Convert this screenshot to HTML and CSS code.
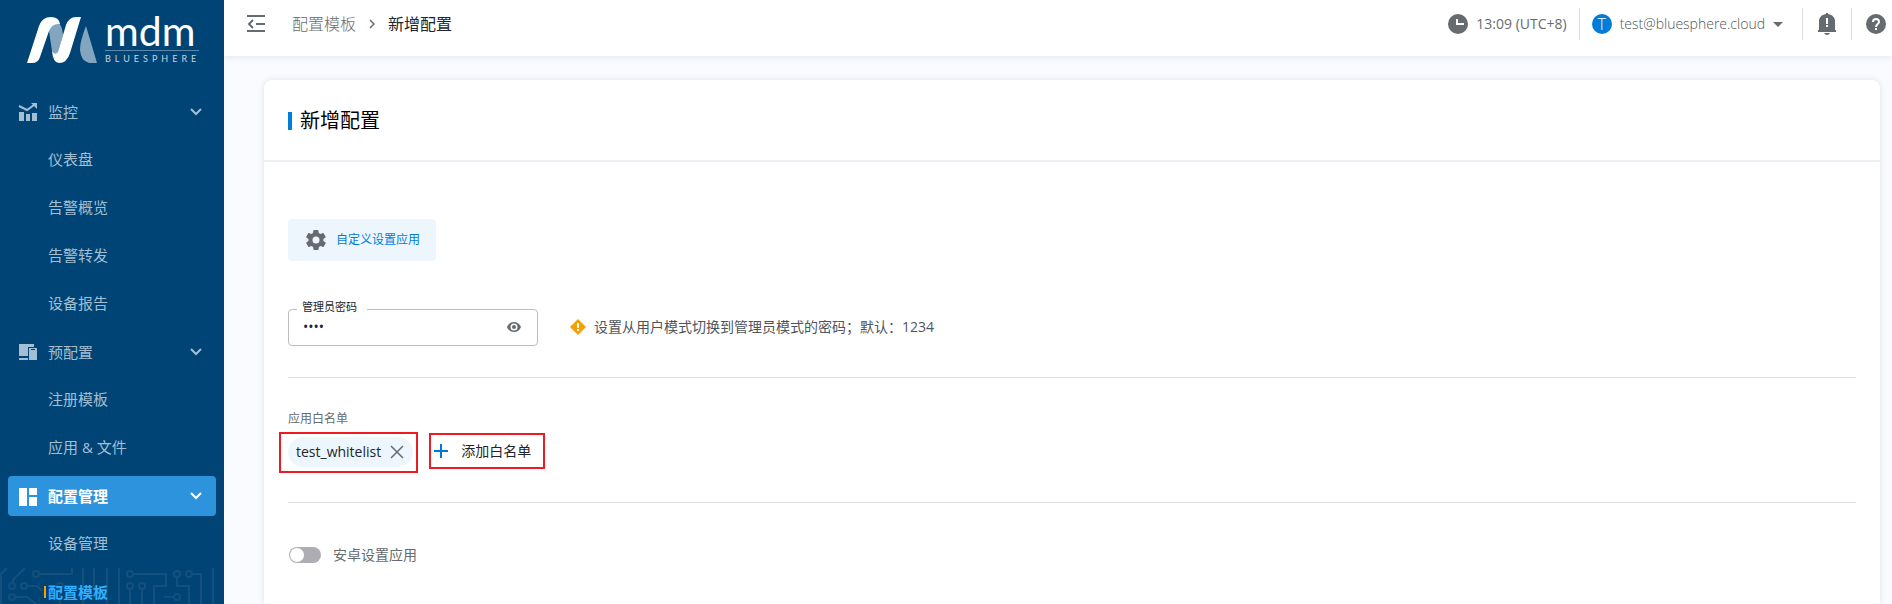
FILE: index.html
```
<!DOCTYPE html>
<html lang="zh-CN">
<head>
    <meta charset="UTF-8">
    <title>新增配置</title>
    <link rel="stylesheet" href="styles.css">
</head>
<body>
<div class="app">
    <aside class="sidebar">
        <div class="logo">
            <svg class="logo-mark" width="70" height="46" viewBox="0 0 70 46">
                <path fill="#84a5bf" d="M32 6Q23 6 22 14l3 20q2 5 6 2l5-18q-1-9-4-12z"/>
                <path fill="#fff" d="M0 46L12 9Q15 0 24 0q8 0 9 7-8-1-11 7l-9 26q-2 6-8 6z"/>
                <path fill="#fff" d="M54 0L43 36q-3 10-11 10-6 0-7-12 3 5 6 1l8-27q3-8 10-8z"/>
                <path fill="#84a5bf" d="M59 9q-6 15-6 24 1 11 9 13h8z"/>
            </svg>
            <div class="logo-text">
                <span class="logo-name">mdm</span>
                <span class="logo-sub">BLUESPHERE</span>
            </div>
        </div>
        <nav class="menu">
            <button class="menu-group" type="button">
                <svg class="menu-icon" width="20" height="20" viewBox="0 0 20 20">
                    <path fill="currentColor" d="M1 10h5v9H1zM8 12h4v7H8zM14 11h5v8h-5z"/>
                    <path fill="none" stroke="currentColor" stroke-width="2" d="M1 4l8 4 7-5"/>
                    <path fill="currentColor" d="M13 1h6v6z"/>
                </svg>
                <span class="menu-name">监控</span>
                <svg width="12" height="8" viewBox="0 0 12 8"><path fill="none" stroke="currentColor" stroke-width="2" d="M1 1l5 5 5-5"/></svg>
            </button>
            <a class="menu-item" href="#">仪表盘</a>
            <a class="menu-item" href="#">告警概览</a>
            <a class="menu-item" href="#">告警转发</a>
            <a class="menu-item" href="#">设备报告</a>
            <button class="menu-group" type="button">
                <svg class="menu-icon" width="20" height="20" viewBox="0 0 20 20">
                    <path fill="currentColor" d="M1 2h15v3h-6v9H1zM1 16h9v2H1z"/>
                    <path fill="currentColor" fill-rule="evenodd" d="M11 6h8v12h-8zM13 7v1h4V7z"/>
                </svg>
                <span class="menu-name">预配置</span>
                <svg width="12" height="8" viewBox="0 0 12 8"><path fill="none" stroke="currentColor" stroke-width="2" d="M1 1l5 5 5-5"/></svg>
            </button>
            <a class="menu-item" href="#">注册模板</a>
            <a class="menu-item" href="#">应用 &amp; 文件</a>
            <button class="menu-group active" type="button">
                <svg class="menu-icon" width="20" height="20" viewBox="0 0 20 20">
                    <path fill="currentColor" d="M1 2h8v18H1zM11 2h8v7h-8zM11 11h8v9h-8z"/>
                </svg>
                <span class="menu-name">配置管理</span>
                <svg width="12" height="8" viewBox="0 0 12 8"><path fill="none" stroke="currentColor" stroke-width="2" d="M1 1l5 5 5-5"/></svg>
            </button>
            <a class="menu-item" href="#">设备管理</a>
            <a class="menu-item current" href="#">配置模板</a>
        </nav>
        <!-- 底部电路纹理 -->
        <svg class="circuit" width="224" height="36" viewBox="0 0 224 36">
            <g fill="none" stroke="#14507d" stroke-width="2">
                <path d="M7 0L1 6v30M25 0L13 12v2M72 0v6H40M83 0v36M94 0v23M107 0v36M119 0v36M16 29h11l9 7M28 18h9l5 5M60 21v15M134 6h32v12h-12v18M130 21v15M142 21v15M177 9v9h12v18M193 6h8v30M213 0v36M164 29h10"/>
                <circle cx="36" cy="6" r="3"/><circle cx="12" cy="18" r="3"/><circle cx="24" cy="18" r="3"/><circle cx="12" cy="29" r="3"/>
                <circle cx="60" cy="18" r="3"/><circle cx="130" cy="6" r="3"/><circle cx="130" cy="18" r="3"/><circle cx="142" cy="18" r="3"/>
                <circle cx="177" cy="6" r="3"/><circle cx="189" cy="6" r="3"/><circle cx="177" cy="29" r="3"/>
            </g>
        </svg>
    </aside>

    <div class="main">
        <header class="topbar">
            <button class="icon-btn" type="button" aria-label="收起菜单">
                <svg width="18" height="18" viewBox="0 0 18 18"><path fill="none" stroke="#666b70" stroke-width="2" d="M0 1h18M9 9h9M0 16h18M6 5L2 9l4 4"/></svg>
            </button>
            <div class="crumbs">
                <a href="#">配置模板</a>
                <svg width="6" height="10" viewBox="0 0 6 10"><path fill="none" stroke="#666b70" stroke-width="1.5" d="M1 1l4 4-4 4"/></svg>
                <span class="crumb-now">新增配置</span>
            </div>
            <div class="clock">
                <svg width="20" height="20" viewBox="0 0 20 20"><circle cx="10" cy="10" r="10" fill="#666b70"/><path fill="none" stroke="#fff" stroke-width="2" d="M9 5v5h7"/></svg>
                <span>13:09 (UTC+8)</span>
            </div>
            <button class="user" type="button">
                <span class="avatar">T</span>
                <span>test@bluesphere.cloud</span>
                <svg width="10" height="5" viewBox="0 0 10 5"><path fill="#666b70" d="M0 0h10L5 5z"/></svg>
            </button>
            <button class="top-btn bell" type="button" aria-label="通知">
                <svg width="20" height="22" viewBox="0 0 20 22">
                    <path fill="#666b70" d="M9 0h2v1c5 1 7 4 7 7v9h1v2H1v-2h1V8c0-3 2-6 7-7zM7 20h6q-1 2-3 2t-3-2z"/>
                    <path fill="#fff" d="M9 5h2v6H9zM9 12h2v2H9z"/>
                </svg>
            </button>
            <button class="top-btn" type="button" aria-label="帮助">
                <svg width="20" height="20" viewBox="0 0 20 20"><circle cx="10" cy="10" r="10" fill="#666b70"/><path fill="none" stroke="#fff" stroke-width="2" d="M7 8c0-4 6-4 6 0 0 2-3 2-3 5"/><path fill="#fff" d="M9 14h2v2H9z"/></svg>
            </button>
        </header>

        <main class="card">
            <div class="card-head">
                <h1>新增配置</h1>
            </div>
            <div class="card-body">
                <button class="custom-btn" type="button">
                    <svg width="20" height="20" viewBox="2 2 20 20"><path fill="#666b70" d="M19.4 13c0-.3.1-.6.1-1s0-.7-.1-1l2.1-1.6c.2-.2.3-.4.1-.6l-2-3.5c-.1-.2-.4-.3-.6-.2l-2.5 1c-.5-.4-1.1-.7-1.7-1l-.4-2.6c0-.3-.2-.5-.5-.5h-4c-.3 0-.5.2-.5.4l-.4 2.7c-.6.2-1.2.6-1.7 1l-2.5-1c-.2-.1-.5 0-.6.2l-2 3.5c-.1.2-.1.5.1.6L4.5 11c0 .3-.1.7-.1 1s0 .7.1 1l-2.1 1.6c-.2.2-.3.4-.1.6l2 3.5c.1.2.4.3.6.2l2.5-1c.5.4 1.1.7 1.7 1l.4 2.6c0 .3.2.5.5.5h4c.3 0 .5-.2.5-.4l.4-2.7c.6-.2 1.2-.6 1.7-1l2.5 1c.2.1.5 0 .6-.2l2-3.5c.1-.2.1-.5-.1-.6zM12 15.5a3.5 3.5 0 1 1 0-7 3.5 3.5 0 0 1 0 7z"/></svg>
                    <span>自定义设置应用</span>
                </button>

                <div class="pwd-row">
                    <fieldset class="field">
                        <legend><label for="pwd">管理员密码</label></legend>
                        <input id="pwd" type="password" value="1234">
                        <button class="icon-btn" type="button" aria-label="显示密码">
                            <svg width="14" height="10" viewBox="0 0 14 10"><path fill="#666b70" fill-rule="evenodd" d="M7 0c3 0 6 2 7 5-1 3-4 5-7 5S1 8 0 5c1-3 4-5 7-5zm0 1.5a3.5 3.5 0 1 0 0 7 3.5 3.5 0 0 0 0-7z"/><circle cx="7" cy="5" r="2" fill="#666b70"/></svg>
                        </button>
                    </fieldset>
                    <p class="hint">
                        <svg width="16" height="16" viewBox="0 0 16 16"><path fill="#f5a000" d="M8 0l8 8-8 8-8-8z"/><path fill="#fff" d="M7 4h2v5H7zM7 10h2v2H7z"/></svg>
                        <span>设置从用户模式切换到管理员模式的密码；默认：1234</span>
                    </p>
                </div>

                <section class="whitelist">
                    <h2>应用白名单</h2>
                    <div class="chips">
                        <div class="mark">
                            <span class="chip">test_whitelist
                                <button class="icon-btn" type="button" aria-label="移除">
                                    <svg width="14" height="14" viewBox="0 0 14 14"><path stroke="#666b70" stroke-width="1.5" d="M1 1l12 12M13 1L1 13"/></svg>
                                </button>
                            </span>
                        </div>
                        <button class="mark add" type="button">
                            <svg width="14" height="14" viewBox="0 0 14 14"><path stroke="#0078d7" stroke-width="2" d="M7 0v14M0 7h14"/></svg>
                            <span>添加白名单</span>
                        </button>
                    </div>
                </section>

                <label class="switch-row">
                    <input class="switch" type="checkbox">
                    <span>安卓设置应用</span>
                </label>
            </div>
        </main>
    </div>
</div>
</body>
</html>
```
FILE: styles.css
```
* {
    box-sizing: border-box;
    margin: 0;
    padding: 0;
}

body {
    font: 14px/20px "Open Sans", "Noto Sans CJK SC", sans-serif;
    color: #666b70;
    background-color: #fafbfe;
    overflow: hidden;
}

a {
    color: inherit;
    text-decoration: none;
}

button {
    font: inherit;
    color: inherit;
    background: none;
    border: 0;
    cursor: pointer;
}

svg {
    display: block;
    flex: none;
}

.app {
    display: flex;
    height: 100vh;
}

/* 侧边栏 */
.sidebar {
    position: relative;
    flex: none;
    width: 224px;
    overflow: hidden;
    background-color: #004475;
}

.logo {
    display: flex;
    gap: 8px;
    height: 92px;
    padding: 17px 24px 0 27px;
    color: #fff;
}

.logo-text {
    display: flex;
    flex-direction: column;
    width: 94px;
}

.logo-name {
    height: 34px;
    border-bottom: 1px solid #5c88a9;
    font: 400 41px/28px Lato, sans-serif;
}

.logo-sub {
    font: 400 9px/16px Lato, sans-serif;
    letter-spacing: 4px;
    color: #c5d5e1;
}

.menu {
    position: relative;
    z-index: 1;
    display: flex;
    flex-direction: column;
    gap: 8px;
    padding: 0 8px;
    font-size: 15px;
    color: #a3bfd3;
}

.menu-group {
    display: flex;
    align-items: center;
    height: 40px;
    padding: 0 14px 0 10px;
    border-radius: 4px;
    text-align: left;
}

.menu-name {
    flex: 1;
    margin-left: 10px;
}

.menu-group.active {
    color: #fff;
    background-color: #2e93dd;
    font-weight: 700;
}

.menu-item {
    height: 40px;
    padding-left: 40px;
    line-height: 38px;
}

.menu-item.current {
    display: flex;
    align-items: center;
    padding-left: 36px;
    color: #30aeff;
    font-weight: 700;
}

.menu-item.current::before {
    content: "";
    width: 2px;
    height: 12px;
    margin-right: 2px;
    background-color: #f5a000;
}

.circuit {
    position: absolute;
    left: 0;
    bottom: 0;
}

/* 顶部栏 */
.main {
    flex: 1;
    min-width: 0;
    display: flex;
    flex-direction: column;
}

.topbar {
    display: flex;
    align-items: center;
    flex: none;
    height: 56px;
    padding: 0 6px 8px 23px;
    background-color: #fff;
    box-shadow: 0 2px 6px #e6e9f2;
}

.crumbs {
    display: flex;
    align-items: center;
    gap: 13px;
    margin-left: 27px;
    font-size: 16px;
    font-weight: 300;
}

.crumb-now {
    color: #20262c;
    font-weight: 400;
}

.clock {
    display: flex;
    align-items: center;
    gap: 8px;
    margin-left: auto;
    padding-right: 12px;
}

.user {
    display: flex;
    align-items: center;
    gap: 8px;
    height: 32px;
    padding: 0 19px 0 12px;
    border-left: 1px solid #dcdcdc;
    font-weight: 300;
    color: #50555a;
}

.avatar {
    width: 20px;
    height: 20px;
    border-radius: 50%;
    background-color: #007cd9;
    color: #fff;
    font-size: 16px;
    text-align: center;
}

.top-btn {
    height: 32px;
    padding-left: 14px;
    border-left: 1px solid #dcdcdc;
}

.bell {
    padding-right: 14px;
}

/* 内容卡片 */
.card {
    flex: 1;
    margin: 24px 12px 0 40px;
    border-radius: 8px 8px 0 0;
    background-color: #fff;
    box-shadow: 0 0 6px #dde2ee;
}

.card-head {
    display: flex;
    align-items: center;
    height: 82px;
    padding: 2px 24px 0;
    border-bottom: 2px solid #edf0f5;
}

.card-head h1 {
    display: flex;
    align-items: center;
    gap: 8px;
    font-size: 20px;
    line-height: 24px;
    font-weight: 400;
    color: #000;
}

.card-head h1::before {
    content: "";
    width: 4px;
    height: 18px;
    background-color: #007cd9;
}

.card-body {
    padding: 57px 24px 0;
}

.custom-btn {
    display: flex;
    align-items: center;
    gap: 10px;
    height: 42px;
    padding: 0 16px 0 18px;
    border-radius: 4px;
    background-color: #eef6fd;
    color: #007cd9;
    font-size: 12px;
}

.pwd-row {
    display: flex;
    align-items: flex-end;
    gap: 32px;
    margin-top: 38px;
    padding-bottom: 31px;
    border-bottom: 1px solid #dcdcdc;
}

.field {
    display: flex;
    align-items: center;
    width: 250px;
    height: 47px;
    padding: 0 16px 10px 14px;
    border: 1px solid #bdbdbd;
    border-radius: 4px;
}

.field legend {
    width: 70px;
    margin-left: -6px;
    padding: 0 0 4px 5px;
    color: #20262c;
    font-size: 11px;
    line-height: 16px;
}

.field input {
    flex: 1;
    min-width: 0;
    border: 0;
    outline: 0;
    background: none;
    font: 14px/20px "Open Sans", sans-serif;
    color: #20262c;
}

.hint {
    display: flex;
    align-items: center;
    gap: 8px;
    height: 39px;
    color: #50555a;
}

.whitelist {
    padding: 31px 0 29px;
    border-bottom: 1px solid #dcdcdc;
}

.whitelist h2 {
    font-size: 12px;
    line-height: 20px;
    font-weight: 400;
}

.chips {
    display: flex;
    align-items: flex-start;
    gap: 11px;
    margin: 3px 0 0 -9px;
}

/* 红色标注框 */
.mark {
    border: 2px solid #ed1c24;
}

.chip {
    display: flex;
    align-items: center;
    gap: 9px;
    height: 30px;
    margin: 3px 3px 4px 7px;
    padding: 0 9px 0 8px;
    border-radius: 15px;
    background-color: #eef6fd;
    color: #20262c;
}

.add {
    display: flex;
    align-items: center;
    gap: 13px;
    height: 36px;
    margin-top: 1px;
    padding: 0 12px 0 3px;
    color: #20262c;
}

.switch-row {
    display: flex;
    align-items: center;
    gap: 12px;
    margin: 42px 0 0 1px;
}

.switch {
    appearance: none;
    width: 32px;
    height: 16px;
    padding: 1px;
    border-radius: 8px;
    background-color: #aeadb3;
}

.switch::before {
    content: "";
    display: block;
    width: 14px;
    height: 14px;
    border-radius: 50%;
    background-color: #fff;
}
```
